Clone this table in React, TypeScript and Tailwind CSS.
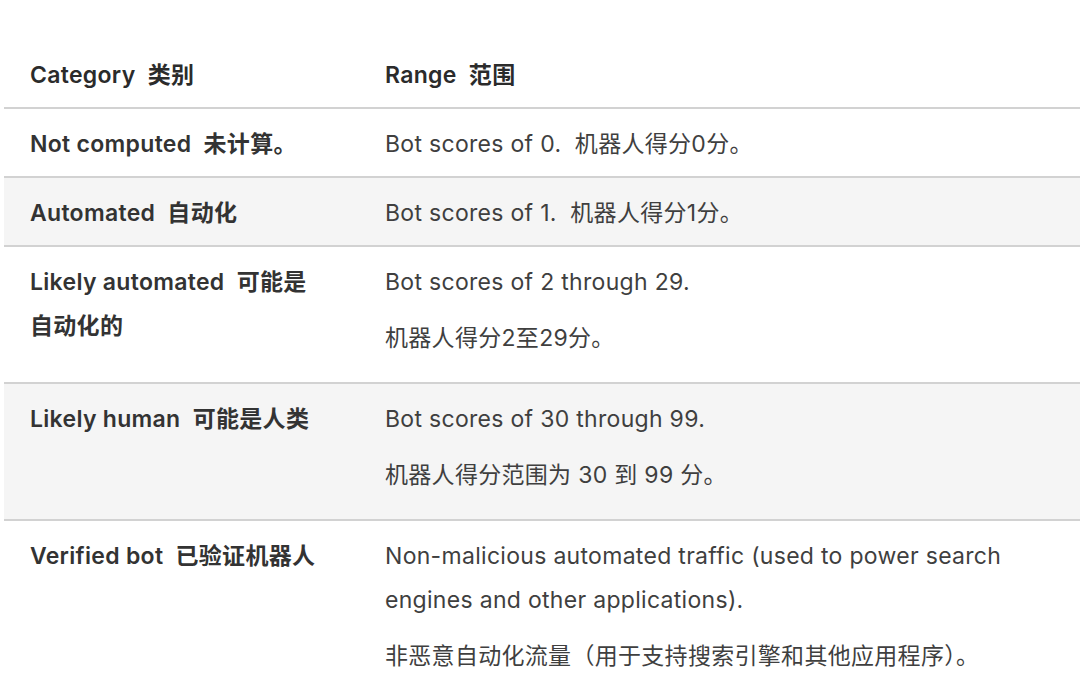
const rows: { label: string; shade: boolean; lines: string[]; single?: boolean }[] = [
    { label: 'Not computed  未计算。', shade: false, lines: ['Bot scores of 0.  机器人得分0分。'], single: true },
    { label: 'Automated  自动化', shade: true, lines: ['Bot scores of 1.  机器人得分1分。'], single: true },
    { label: 'Likely automated  可能是自动化的', shade: false, lines: ['Bot scores of 2 through 29.', '机器人得分2至29分。'] },
    { label: 'Likely human  可能是人类', shade: true, lines: ['Bot scores of 30 through 99.', '机器人得分范围为 30 到 99 分。'] },
    {
        label: 'Verified bot  已验证机器人',
        shade: false,
        lines: [
            'Non-malicious automated traffic (used to power search engines and other applications).',
            '非恶意自动化流量（用于支持搜索引擎和其他应用程序）。',
        ],
    },
];

export default function App() {
    return (
        <div
            className="w-[1080px] h-[694px] overflow-hidden bg-white pt-[41px] pl-[4px]"
            style={{ fontFamily: 'Inter, "Noto Sans CJK SC", sans-serif' }}
        >
            <table className="w-[1100px] border-collapse text-[23px] leading-[44px] tracking-[0.3px] whitespace-pre-wrap">
                <thead>
                    <tr className="border-b-2 border-[#d2d2d2]">
                        <th className="w-[355px] pl-[26px] pr-[37px] pt-3 pb-[10px] text-left font-semibold text-[#2b2b2b]">
                            Category  类别
                        </th>
                        <th className="pl-[26px] pr-4 pt-3 pb-[10px] text-left font-semibold text-[#2b2b2b]">
                            Range  范围
                        </th>
                    </tr>
                </thead>
                <tbody>
                    {rows.map((row) => (
                        <tr
                            key={row.label}
                            className={`border-b-2 border-[#d2d2d2] align-top ${row.shade ? 'bg-[#f5f5f5]' : 'bg-white'}`}
                        >
                            <td className="w-[355px] pl-[26px] pr-[37px] pt-[13px] pb-[10px] font-semibold text-[#333333]">
                                {row.label}
                            </td>
                            <td className="pl-[26px] pr-[100px] pt-[13px] pb-[10px] text-[#3f3f3f]">
                                {row.lines.map((line) => (
                                    <p key={line} className={row.single ? '' : 'mb-[12px]'}>
                                        {line}
                                    </p>
                                ))}
                            </td>
                        </tr>
                    ))}
                </tbody>
            </table>
        </div>
    );
}
